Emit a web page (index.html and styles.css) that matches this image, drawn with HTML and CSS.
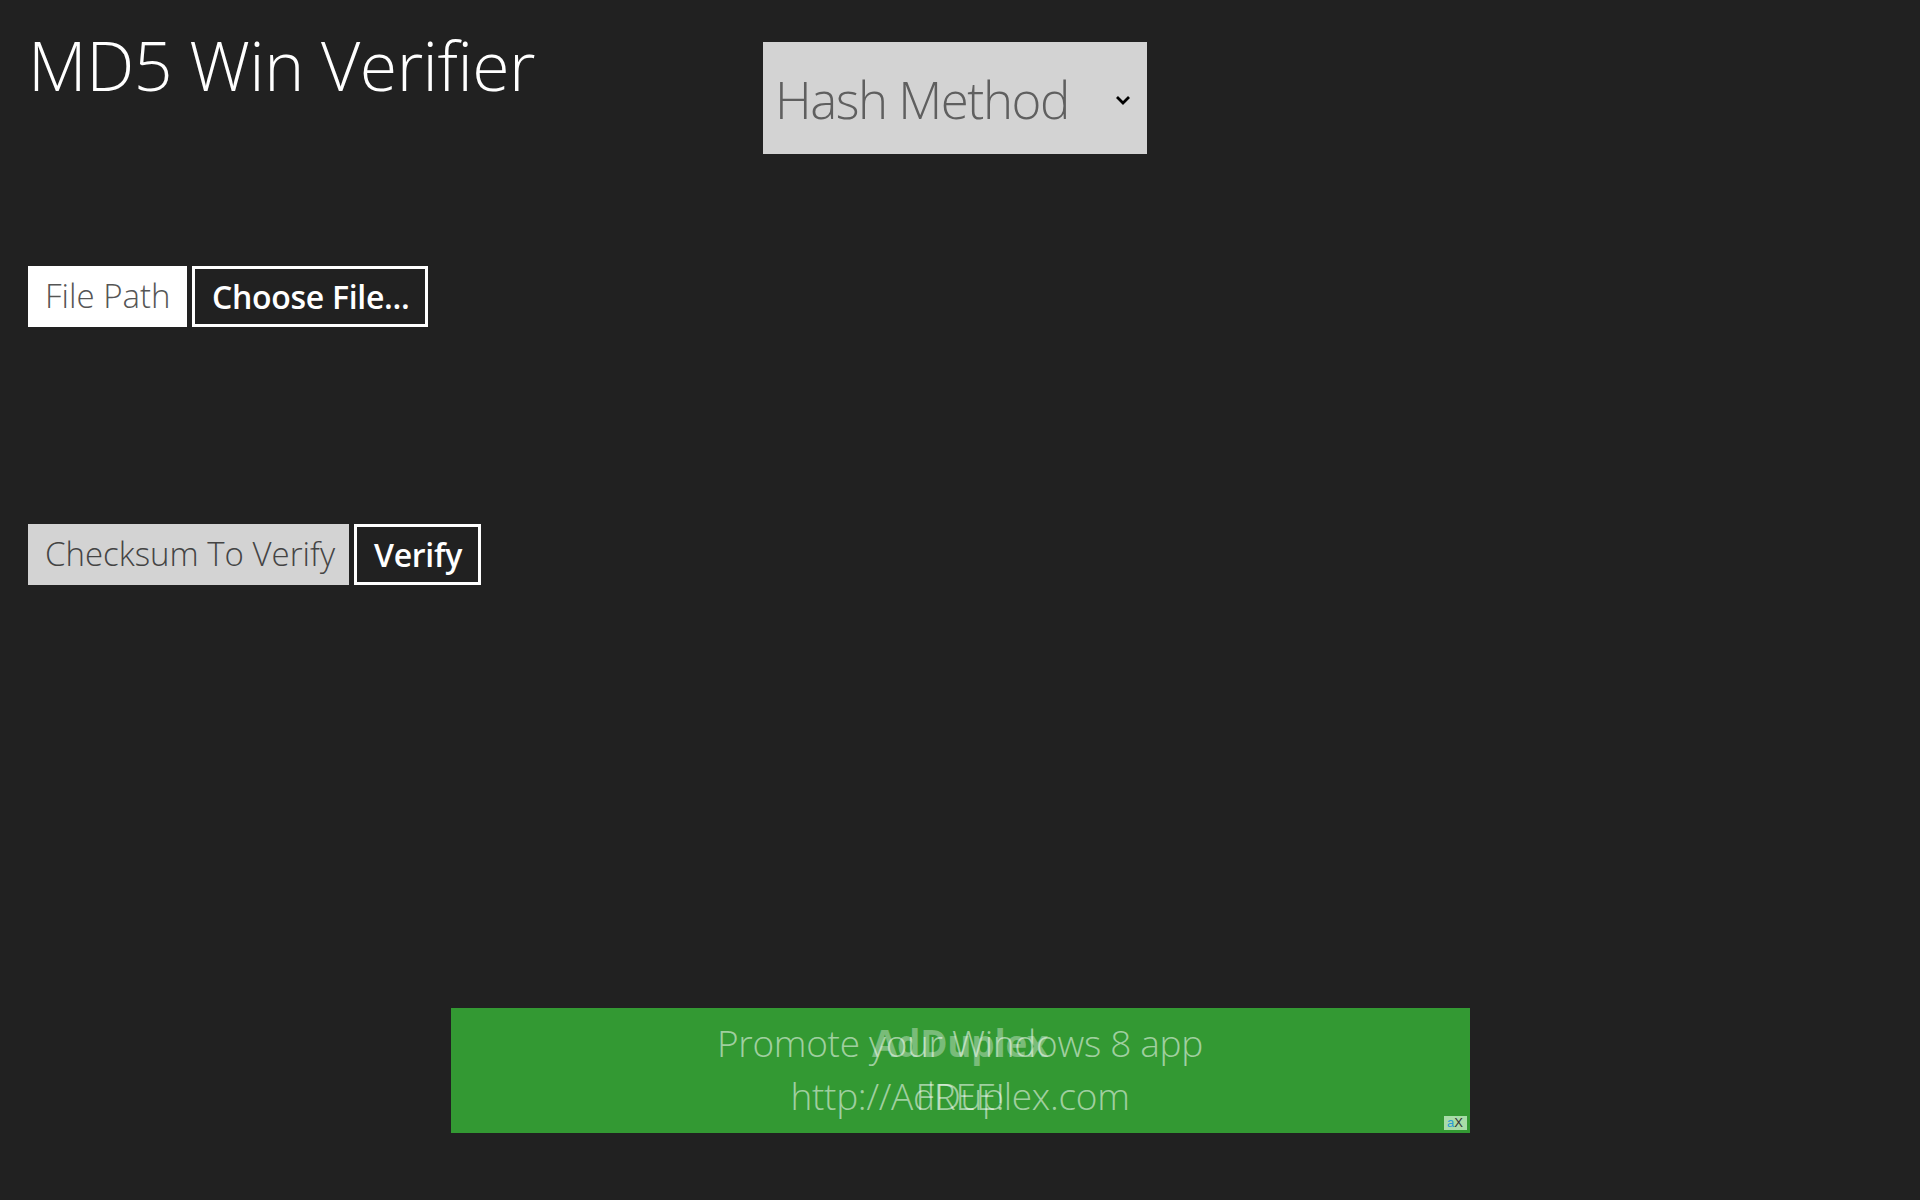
FILE: index.html
```html
<!DOCTYPE html>
<html lang="en">
<head>
    <meta charset="UTF-8">
    <title>MD5 Win Verifier</title>
    <link rel="stylesheet" href="styles.css">
</head>
<body>
    <div class="app">
        <header class="header">
            <h1 class="title">MD5 Win Verifier</h1>
            <div class="select">
                <span class="select-text">Hash Method</span>
                <svg class="chevron" width="16" height="10" viewBox="0 0 16 10">
                    <path d="M2 2 L8 8 L14 2" fill="none" stroke="#000" stroke-width="2.8"/>
                </svg>
            </div>
        </header>

        <div class="row row-file">
            <div class="field field-white">File Path</div>
            <button class="button">Choose File...</button>
        </div>

        <div class="row row-check">
            <div class="field field-grey">Checksum To Verify</div>
            <button class="button">Verify</button>
        </div>

        <div class="ad">
            <div class="ad-layer">
                <div class="ad-line ad-line-one">Promote your Windows 8 app</div>
                <div class="ad-line ad-line-two">http://AdDuplex.com</div>
            </div>
            <div class="ad-layer">
                <div class="ad-line ad-line-one ad-brand">AdDuplex</div>
                <div class="ad-line ad-line-two">FREE!</div>
            </div>
            <div class="ad-badge"><span class="ad-a">a</span><span class="ad-x">X</span></div>
        </div>
    </div>
</body>
</html>
```

FILE: styles.css
```css
:root {
    --bg: #212121;
    --field: #d3d3d3;
    --white: #ffffff;
    --green: #339933;
}

* {
    box-sizing: border-box;
}

body {
    margin: 0;
    background: var(--bg);
    color: var(--white);
    font-family: "Open Sans", "Noto Sans", sans-serif;
    min-height: 100vh;
}

.app {
    padding: 22px 28px 0;
}

.header {
    display: flex;
    align-items: flex-start;
}

.title {
    margin: 0;
    width: 735px;
    font-size: 68px;
    font-weight: 300;
    line-height: 86px;
    letter-spacing: -0.5px;
}

.select {
    margin-top: 20px;
    width: 384px;
    height: 112px;
    background: var(--field);
    display: flex;
    align-items: center;
    justify-content: space-between;
    padding: 2px 16px 0 12px;
}

.select-text {
    color: #5f5f5f;
    font-size: 51px;
    font-weight: 300;
    letter-spacing: -1.5px;
}

.chevron {
    margin-top: 2px;
}

.row {
    display: flex;
    gap: 5px;
}

.row-file {
    margin-top: 112px;
}

.row-check {
    margin-top: 197px;
}

.field {
    height: 61px;
    display: flex;
    align-items: center;
    padding: 0 0 2px 17px;
    font-size: 33px;
    font-weight: 300;
    white-space: nowrap;
}

.field-white {
    background: var(--white);
    color: #555;
    width: 159px;
}

.field-grey {
    background: var(--field);
    color: #444;
    width: 321px;
}

.button {
    height: 61px;
    background: var(--bg);
    border: 3px solid var(--white);
    color: var(--white);
    font-family: "Open Sans", "Noto Sans", sans-serif;
    font-size: 32px;
    font-weight: 600;
    padding: 0 16px 0 17px;
    letter-spacing: -0.3px;
    white-space: nowrap;
}

.ad {
    margin: 423px auto 0;
    width: 1019px;
    height: 125px;
    background: var(--green);
    display: grid;
    justify-items: center;
    padding-top: 10px;
}

.ad-layer {
    grid-area: 1 / 1;
    display: flex;
    flex-direction: column;
    align-items: center;
}

.ad-line {
    color: rgba(255, 255, 255, 0.55);
    font-size: 37px;
    font-weight: 300;
    line-height: 50px;
    letter-spacing: -0.3px;
}

.ad-line-two {
    margin-top: 3px;
}

.ad-brand {
    font-weight: 700;
    color: rgba(255, 255, 255, 0.35);
}

.ad-badge {
    grid-area: 1 / 1;
    align-self: end;
    justify-self: end;
    margin: 0 3px 3px 0;
    width: 23px;
    height: 14px;
    background: #a8dca8;
    font-family: "Liberation Sans", sans-serif;
    font-size: 13px;
    line-height: 14px;
    text-align: center;
}

.ad-a {
    color: #2a9ad8;
}

.ad-x {
    color: #333;
}
```
